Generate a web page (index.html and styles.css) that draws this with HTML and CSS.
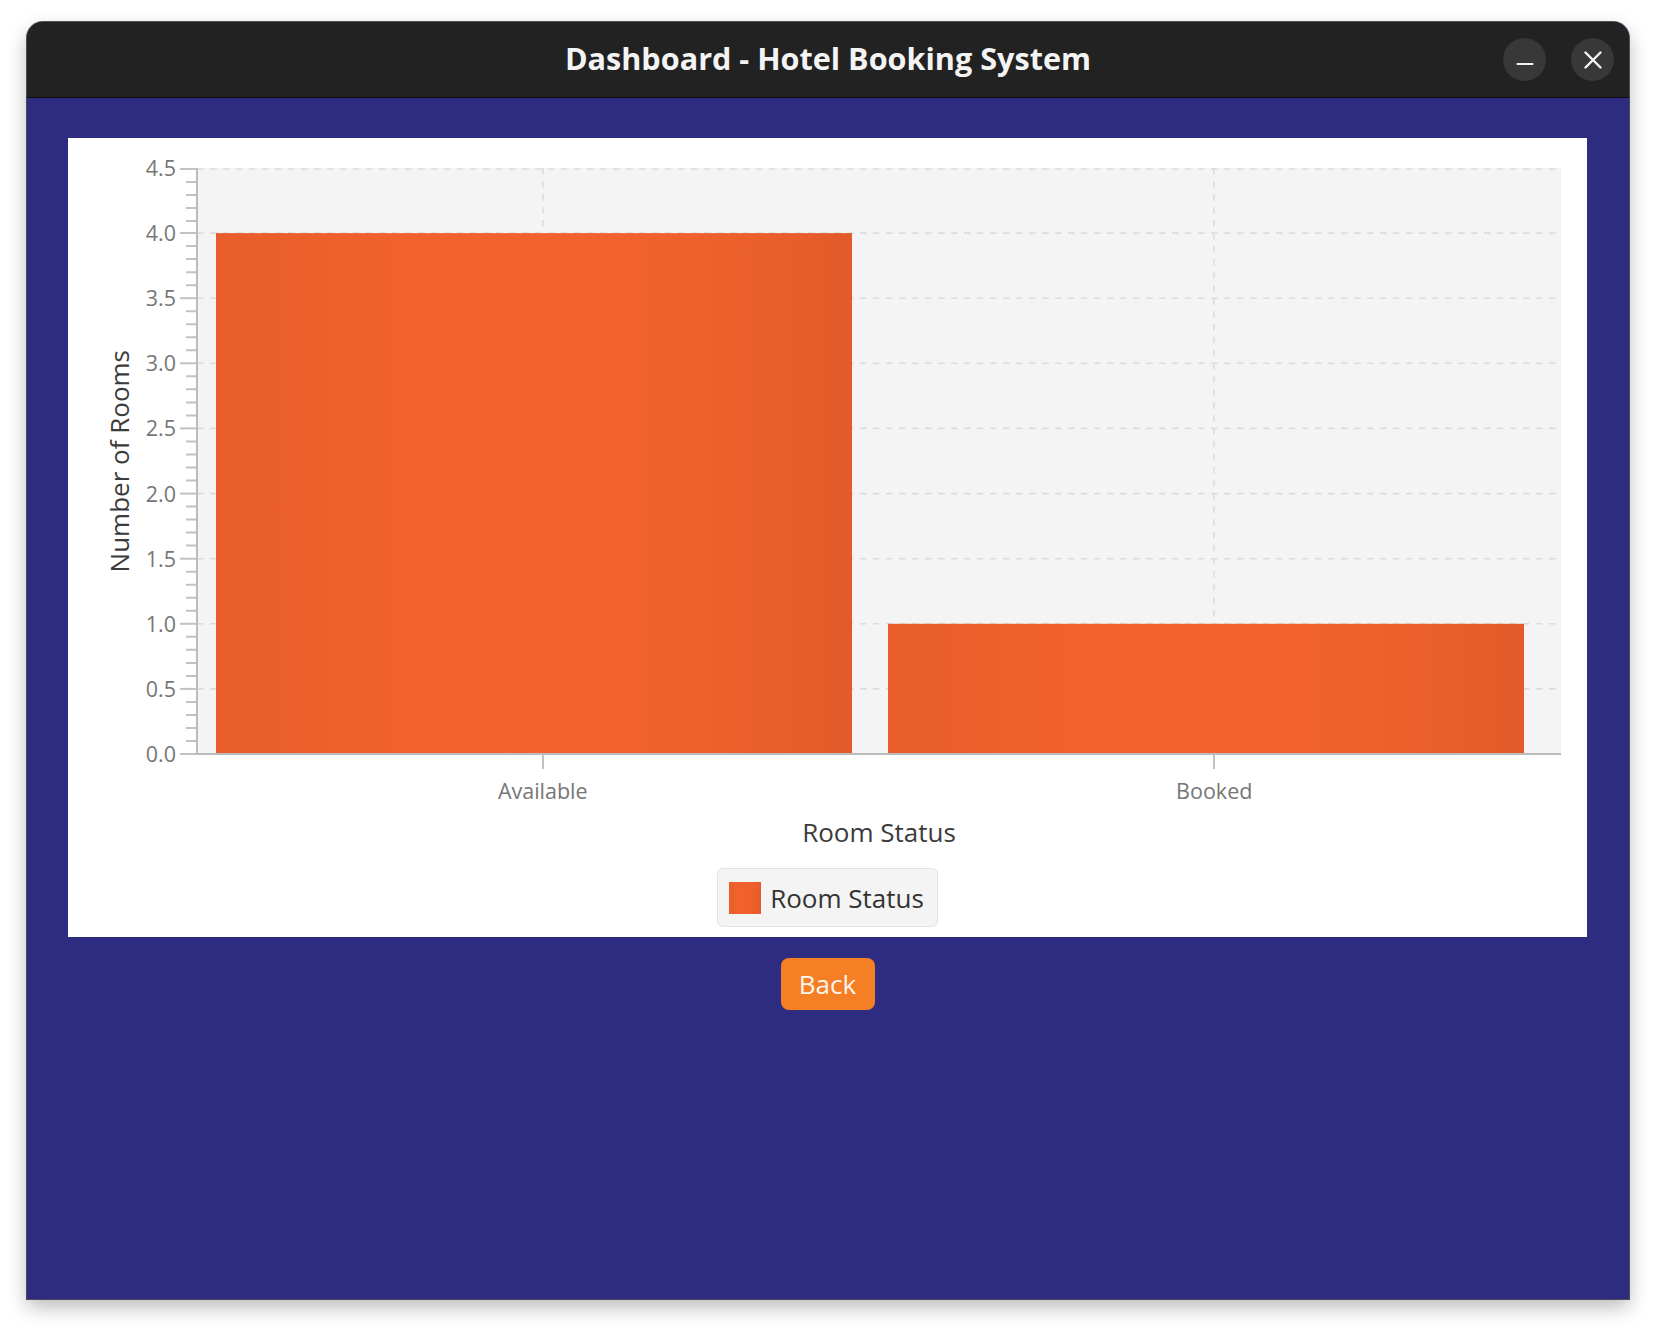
FILE: index.html
```html
<!DOCTYPE html>
<html lang="en">
<head>
<meta charset="utf-8">
<title>Dashboard - Hotel Booking System</title>
<link rel="stylesheet" href="styles.css">
</head>
<body>
<div class="window">
  <header class="titlebar">
    <div class="spacer"></div>
    <div class="title">Dashboard - Hotel Booking System</div>
    <div class="controls">
      <button class="ctl" aria-label="Minimize">
        <svg width="18" height="18" viewBox="0 0 18 18"><line x1="1.5" y1="13" x2="16.5" y2="13" stroke="#f2f2f2" stroke-width="2.2" stroke-linecap="round"/></svg>
      </button>
      <button class="ctl" aria-label="Close">
        <svg width="18" height="18" viewBox="0 0 18 18"><path d="M1.5 1.5 L16.5 16.5 M16.5 1.5 L1.5 16.5" stroke="#f2f2f2" stroke-width="2.4" stroke-linecap="round"/></svg>
      </button>
    </div>
  </header>
  <main class="content">
    <section class="chart">
      <div class="chart-grid">
        <div class="y-title"><span>Number of Rooms</span></div>
        <div class="y-ticks">
          <span>4.5</span><span>4.0</span><span>3.5</span><span>3.0</span><span>2.5</span>
          <span>2.0</span><span>1.5</span><span>1.0</span><span>0.5</span><span>0.0</span>
        </div>
        <div class="plot">
          <svg class="plot-svg" width="1364" height="586" viewBox="0 0 1364 586">
            <defs>
              <linearGradient id="barfill" x1="0" y1="0" x2="1" y2="0">
                <stop offset="0" stop-color="#e75d2b"/>
                <stop offset="0.25" stop-color="#f0612c"/>
                <stop offset="0.5" stop-color="#f3622d"/>
                <stop offset="0.75" stop-color="#ef612c"/>
                <stop offset="1" stop-color="#e35b2a"/>
              </linearGradient>
            </defs>
            <rect class="plot-bg" x="0" y="0" width="1364" height="586"/>
            <g class="grid-h">
              <line x1="0" x2="1364" y1="1" y2="1"/>
              <line x1="0" x2="1364" y1="65.1" y2="65.1"/>
              <line x1="0" x2="1364" y1="130.2" y2="130.2"/>
              <line x1="0" x2="1364" y1="195.3" y2="195.3"/>
              <line x1="0" x2="1364" y1="260.4" y2="260.4"/>
              <line x1="0" x2="1364" y1="325.6" y2="325.6"/>
              <line x1="0" x2="1364" y1="390.7" y2="390.7"/>
              <line x1="0" x2="1364" y1="455.8" y2="455.8"/>
              <line x1="0" x2="1364" y1="520.9" y2="520.9"/>
            </g>
            <g class="grid-v">
              <line x1="346" x2="346" y1="0" y2="586"/>
              <line x1="1017" x2="1017" y1="0" y2="586"/>
            </g>
            <rect class="bar" x="19" y="65.1" width="636" height="520.9"/>
            <rect class="bar" x="691" y="455.8" width="636" height="130.2"/>
            <g class="ticks">
              <line x1="-17" x2="0" y1="1" y2="1"/>
              <line x1="-17" x2="0" y1="65.1" y2="65.1"/>
              <line x1="-17" x2="0" y1="130.2" y2="130.2"/>
              <line x1="-17" x2="0" y1="195.3" y2="195.3"/>
              <line x1="-17" x2="0" y1="260.4" y2="260.4"/>
              <line x1="-17" x2="0" y1="325.6" y2="325.6"/>
              <line x1="-17" x2="0" y1="390.7" y2="390.7"/>
              <line x1="-17" x2="0" y1="455.8" y2="455.8"/>
              <line x1="-17" x2="0" y1="520.9" y2="520.9"/>
              <line x1="-17" x2="0" y1="586" y2="586"/>
              <line x1="346" x2="346" y1="586" y2="601"/>
              <line x1="1017" x2="1017" y1="586" y2="601"/>
            </g>
            <g class="minor">
              <path d="M-11 14 H0 M-11 27 H0 M-11 40 H0 M-11 53 H0
                       M-11 78.1 H0 M-11 91.1 H0 M-11 104.2 H0 M-11 117.2 H0
                       M-11 143.2 H0 M-11 156.2 H0 M-11 169.3 H0 M-11 182.3 H0
                       M-11 208.3 H0 M-11 221.3 H0 M-11 234.4 H0 M-11 247.4 H0
                       M-11 273.4 H0 M-11 286.5 H0 M-11 299.5 H0 M-11 312.5 H0
                       M-11 338.6 H0 M-11 351.6 H0 M-11 364.6 H0 M-11 377.6 H0
                       M-11 403.7 H0 M-11 416.7 H0 M-11 429.7 H0 M-11 442.8 H0
                       M-11 468.8 H0 M-11 481.8 H0 M-11 494.9 H0 M-11 507.9 H0
                       M-11 533.9 H0 M-11 546.9 H0 M-11 560 H0 M-11 573 H0"/>
            </g>
            <line class="axis" x1="0" x2="0" y1="0" y2="587"/>
            <line class="axis" x1="0" x2="1364" y1="586" y2="586"/>
          </svg>
        </div>
        <div class="x-ticks"><span>Available</span><span>Booked</span></div>
        <div class="x-title">Room Status</div>
      </div>
      <div class="legend"><span class="legend-symbol"></span><span class="legend-text">Room Status</span></div>
    </section>
    <button class="back">Back</button>
  </main>
</div>
</body>
</html>
```

FILE: styles.css
```css
* { box-sizing: border-box; }
html, body { margin: 0; }
body {
  width: 1656px;
  height: 1332px;
  padding: 22px 0 0 27px;
  background: #ffffff;
  font-family: "Open Sans", "Noto Sans", sans-serif;
  overflow: hidden;
}
.window {
  width: 1602px;
  height: 1277px;
  display: flex;
  flex-direction: column;
  background: #2d2c80;
  border-radius: 16px 16px 0 0;
  box-shadow: 0 0 0 1px rgba(50, 50, 62, 0.85), 0 8px 20px rgba(0, 0, 0, 0.28);
  overflow: hidden;
}
.titlebar {
  height: 76px;
  flex: none;
  display: grid;
  grid-template-columns: 1fr auto 1fr;
  align-items: center;
  background: #222222;
  border-bottom: 1px solid #0c0c0c;
}
.title {
  color: #f4f4f4;
  font-weight: 700;
  font-size: 30.6px;
  line-height: 40px;
  padding-bottom: 4px;
  white-space: nowrap;
}
.controls {
  justify-self: end;
  display: flex;
  gap: 25px;
  margin-right: 15px;
}
.ctl {
  width: 43px;
  height: 43px;
  border: 0;
  padding: 0;
  border-radius: 50%;
  background: #383838;
  display: grid;
  place-items: center;
}
.ctl svg { display: block; }
.content {
  flex: 1;
  display: flex;
  flex-direction: column;
  align-items: center;
  padding: 40px 42px 0 41px;
}
.chart {
  width: 100%;
  background: #ffffff;
  padding: 30px 0 10px 0;
  display: flex;
  flex-direction: column;
  align-items: center;
}
.chart-grid {
  width: 100%;
  display: grid;
  grid-template-columns: 33px 36px 60px 1364px 26px;
  grid-template-rows: 586px auto auto;
}
.y-title {
  grid-column: 2;
  grid-row: 1;
  display: flex;
  align-items: center;
  justify-content: center;
}
.y-title span {
  writing-mode: vertical-rl;
  transform: rotate(180deg);
  font-size: 26px;
  line-height: 36px;
  color: #3b3b3b;
  white-space: nowrap;
}
.y-ticks {
  grid-column: 3;
  grid-row: 1;
  margin: -12px 0;
  padding-right: 21px;
  display: flex;
  flex-direction: column;
  justify-content: space-between;
  align-items: flex-end;
  font-size: 21.5px;
  line-height: 24px;
  color: #767676;
}
.plot {
  grid-column: 4;
  grid-row: 1;
}
.plot-svg { display: block; overflow: visible; }
.plot-bg { fill: #f4f4f4; }
.grid-h line, .grid-v line {
  stroke: #dcdcdc;
  stroke-width: 1.6;
  stroke-dasharray: 6.5 6.5;
}
.bar { fill: url(#barfill); }
.ticks line, .minor path {
  stroke: #c2c2c2;
  stroke-width: 2;
  fill: none;
}
.axis { stroke: #bcbcbc; stroke-width: 2; }
.x-ticks {
  grid-column: 4;
  grid-row: 2;
  margin: 0 11px 0 10px;
  padding-top: 22px;
  display: grid;
  grid-template-columns: 1fr 1fr;
  justify-items: center;
  font-size: 21.5px;
  line-height: 30px;
  color: #767676;
}
.x-title {
  grid-column: 4;
  grid-row: 3;
  margin-top: 9px;
  text-align: center;
  font-size: 26px;
  line-height: 34px;
  color: #3b3b3b;
}
.legend {
  margin-top: 19px;
  height: 59px;
  display: flex;
  align-items: center;
  gap: 9px;
  padding: 0 13px 0 11px;
  background: #f4f4f4;
  border: 1px solid #e3e3e3;
  border-radius: 6px;
}
.legend-symbol {
  width: 32px;
  height: 32px;
  background: linear-gradient(to right, #e95e2b, #f3622d 40%, #ef612c 70%, #e45c2a);
}
.legend-text {
  font-size: 26px;
  line-height: 34px;
  color: #333333;
}
.back {
  margin-top: 21px;
  width: 94px;
  height: 52px;
  padding: 0;
  border: 0;
  border-radius: 8px;
  background: #f47f24;
  color: #fff4ee;
  font-family: "Open Sans", "Noto Sans", sans-serif;
  font-size: 26px;
  line-height: 34px;
}
```
